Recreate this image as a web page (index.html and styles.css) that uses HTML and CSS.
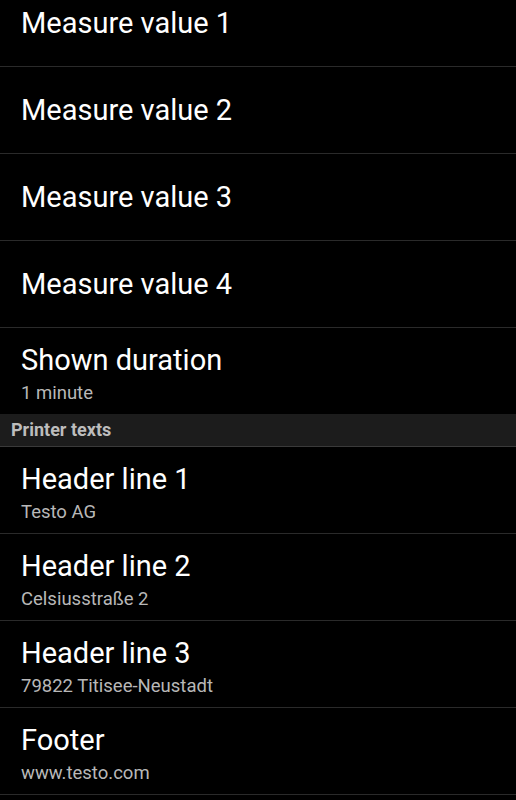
FILE: index.html
```html
<!DOCTYPE html>
<html>
<head>
	<meta charset="utf-8">
	<title>Settings</title>
	<link rel="stylesheet" href="styles.css">
</head>
<body>
	<div class="pref-list">
		<!-- Anzeige -->
		<div class="pref">
			<div class="pref-title">Measure value 1</div>
		</div>
		<div class="pref">
			<div class="pref-title">Measure value 2</div>
		</div>
		<div class="pref">
			<div class="pref-title">Measure value 3</div>
		</div>
		<div class="pref">
			<div class="pref-title">Measure value 4</div>
		</div>
		<div class="pref with-summary last">
			<div class="pref-title">Shown duration</div>
			<div class="pref-summary">1 minute</div>
		</div>

		<!-- Drucker -->
		<div class="pref-category">Printer texts</div>
		<div class="pref with-summary">
			<div class="pref-title">Header line 1</div>
			<div class="pref-summary">Testo AG</div>
		</div>
		<div class="pref with-summary">
			<div class="pref-title">Header line 2</div>
			<div class="pref-summary">Celsiusstraße 2</div>
		</div>
		<div class="pref with-summary">
			<div class="pref-title">Header line 3</div>
			<div class="pref-summary">79822 Titisee-Neustadt</div>
		</div>
		<div class="pref with-summary">
			<div class="pref-title">Footer</div>
			<div class="pref-summary">www.testo.com</div>
		</div>
	</div>
</body>
</html>
```

FILE: styles.css
```css
body {
	margin: 0;
	padding: 0;
	background-color: #000;
	font-family: Roboto, "Noto Sans", Arial, sans-serif;
	color: #fff;
	overflow: hidden;
}

.pref-list {
	margin-top: -20px;
}

.pref {
	box-sizing: border-box;
	height: 87px;
	padding: 0 21px;
	display: flex;
	flex-direction: column;
	justify-content: center;
	border-bottom: 1px solid #2a2a2a;
}

.pref.with-summary {
	padding-top: 7px;
}

.pref.last {
	height: 86px;
	border-bottom: none;
}

.pref-title {
	font-size: 29px;
	line-height: 34px;
	color: #fff;
}

.pref-summary {
	margin-top: 2px;
	font-size: 18.5px;
	line-height: 28px;
	color: #b8b8b8;
}

.pref-category {
	box-sizing: border-box;
	height: 33px;
	line-height: 32px;
	padding: 0 11px;
	background-color: #1c1c1c;
	border-bottom: 1px solid #3a3a3a;
	color: #bdbdbd;
	font-size: 18px;
	font-weight: bold;
}
```
